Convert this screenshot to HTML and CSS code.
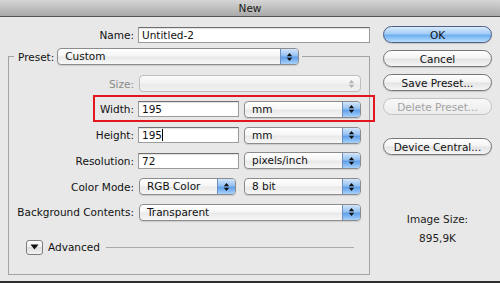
FILE: index.html
```html
<!DOCTYPE html>
<html lang="en">
<head>
  <meta charset="UTF-8">
  <title>New</title>
  <link rel="stylesheet" href="styles.css">
</head>
<body>

  <div class="window">
    <!-- Title bar -->
    <div class="titlebar">New</div>

    <div class="content">
      <!-- Left side: document settings -->
      <div class="main">
        <div class="row name-row">
          <label class="label">Name:</label>
          <div class="field w-name">Untitled-2</div>
        </div>

        <fieldset class="preset-box">
          <legend class="preset-legend">
            <span class="preset-label">Preset:</span>
            <div class="popup w-preset">
              <span class="popup-text">Custom</span>
              <span class="stepper"><svg width="7" height="10" viewBox="0 0 7 10"><path d="M3.5 1L6.2 4.2H0.8Z M3.5 9L6.2 5.8H0.8Z"/></svg></span>
            </div>
          </legend>

          <div class="rows">
            <div class="row">
              <label class="label disabled">Size:</label>
              <div class="popup w-full is-disabled">
                <span class="popup-text"></span>
                <span class="stepper"><svg width="7" height="10" viewBox="0 0 7 10"><path d="M3.5 1L6.2 4.2H0.8Z M3.5 9L6.2 5.8H0.8Z"/></svg></span>
              </div>
            </div>

            <div class="row">
              <label class="label">Width:</label>
              <div class="field w-num">195</div>
              <div class="popup w-unit">
                <span class="popup-text">mm</span>
                <span class="stepper"><svg width="7" height="10" viewBox="0 0 7 10"><path d="M3.5 1L6.2 4.2H0.8Z M3.5 9L6.2 5.8H0.8Z"/></svg></span>
              </div>
            </div>

            <div class="row">
              <label class="label">Height:</label>
              <div class="field w-num">195<span class="caret"></span></div>
              <div class="popup w-unit">
                <span class="popup-text">mm</span>
                <span class="stepper"><svg width="7" height="10" viewBox="0 0 7 10"><path d="M3.5 1L6.2 4.2H0.8Z M3.5 9L6.2 5.8H0.8Z"/></svg></span>
              </div>
            </div>

            <div class="row">
              <label class="label">Resolution:</label>
              <div class="field w-num">72</div>
              <div class="popup w-unit">
                <span class="popup-text">pixels/inch</span>
                <span class="stepper"><svg width="7" height="10" viewBox="0 0 7 10"><path d="M3.5 1L6.2 4.2H0.8Z M3.5 9L6.2 5.8H0.8Z"/></svg></span>
              </div>
            </div>

            <div class="row">
              <label class="label">Color Mode:</label>
              <div class="popup w-mode">
                <span class="popup-text">RGB Color</span>
                <span class="stepper"><svg width="7" height="10" viewBox="0 0 7 10"><path d="M3.5 1L6.2 4.2H0.8Z M3.5 9L6.2 5.8H0.8Z"/></svg></span>
              </div>
              <div class="popup w-unit">
                <span class="popup-text">8 bit</span>
                <span class="stepper"><svg width="7" height="10" viewBox="0 0 7 10"><path d="M3.5 1L6.2 4.2H0.8Z M3.5 9L6.2 5.8H0.8Z"/></svg></span>
              </div>
            </div>

            <div class="row">
              <label class="label">Background Contents:</label>
              <div class="popup w-full">
                <span class="popup-text">Transparent</span>
                <span class="stepper"><svg width="7" height="10" viewBox="0 0 7 10"><path d="M3.5 1L6.2 4.2H0.8Z M3.5 9L6.2 5.8H0.8Z"/></svg></span>
              </div>
            </div>
          </div>

          <!-- Advanced disclosure -->
          <div class="advanced">
            <span class="disclosure"><svg width="9" height="6" viewBox="0 0 9 6"><path d="M0.5 0.5H8.5L4.5 5.5Z"/></svg></span>
            <span class="advanced-text">Advanced</span>
            <span class="advanced-line"></span>
          </div>
        </fieldset>
      </div>

      <!-- Right side: buttons -->
      <div class="side">
        <button class="btn btn-default">OK</button>
        <button class="btn">Cancel</button>
        <button class="btn">Save Preset...</button>
        <button class="btn" disabled>Delete Preset...</button>
        <button class="btn btn-gap">Device Central...</button>

        <div class="image-size">
          <p>Image Size:</p>
          <p>895,9K</p>
        </div>
      </div>
    </div>

    <div class="bottom-edge"></div>

    <!-- Red highlight around the Width row -->
    <div class="highlight"></div>
  </div>

</body>
</html>
```

FILE: styles.css
```css
body {
  margin: 0;
  padding: 0;
  font-family: "DejaVu Sans", Verdana, sans-serif;
  font-size: 10.5px;
  color: #111;
}

.window {
  position: relative;
  width: 500px;
  height: 283px;
  background-color: #e8e8e8;
  display: flex;
  flex-direction: column;
  overflow: hidden;
}

.titlebar {
  height: 16px;
  line-height: 16px;
  text-align: center;
  color: #1a1a1a;
  background: linear-gradient(#d6d6d6, #a9a9a9);
  border-bottom: 1px solid #555;
}

.content {
  flex: 1;
  display: flex;
  padding: 0 8px;
}

.bottom-edge {
  height: 2px;
  background-color: #2e2e2e;
}

/* Left column */
.main {
  width: 362px;
}

.row {
  display: flex;
  align-items: center;
  height: 17px;
}

.name-row {
  margin-top: 9px;
}

.label {
  width: 129px;
  padding-right: 4px;
  box-sizing: border-box;
  text-align: right;
  white-space: nowrap;
}

.name-row .label {
  width: 130px;
}

.label.disabled {
  color: #8a8a8a;
}

.field {
  height: 16px;
  line-height: 15px;
  padding-left: 3px;
  box-sizing: border-box;
  background: #fff;
  border: 1px solid #9b9b9b;
  border-top-color: #6e6e6e;
  box-shadow: inset 0 1px 1px rgba(0, 0, 0, 0.12);
}

.caret {
  display: inline-block;
  width: 1px;
  height: 12px;
  background: #000;
  vertical-align: -2px;
}

.w-name { width: 232px; }
.w-num { width: 101px; margin-right: 5px; }
.w-unit { width: 117px; }
.w-mode { width: 97px; margin-left: 1px; margin-right: 8px; }
.w-full { width: 222px; margin-left: 1px; }
.w-preset { width: 242px; }

/* Popup menus */
.popup {
  display: flex;
  height: 17px;
  box-sizing: border-box;
  border: 1px solid #8c8c8c;
  border-radius: 4px;
  overflow: hidden;
  background: linear-gradient(#ffffff, #f6f6f6 45%, #e9e9e9 55%, #f7f7f7);
  box-shadow: 0 1px 1px rgba(0, 0, 0, 0.12);
}

.popup-text {
  flex: 1;
  padding-left: 7px;
  line-height: 15px;
  white-space: nowrap;
}

.stepper {
  width: 17px;
  display: flex;
  align-items: center;
  justify-content: center;
  border-left: 1px solid #6d8fbf;
  background: linear-gradient(#d3e6fb, #94c1f1 45%, #5f9fe9 55%, #a9d2fa);
}

.stepper svg {
  fill: #111;
}

.popup.is-disabled {
  border-color: #bdbdbd;
  box-shadow: none;
  background: linear-gradient(#fbfbfb, #f1f1f1 50%, #e9e9e9 50%, #f2f2f2);
}

.popup.is-disabled .stepper {
  border-left: none;
  background: none;
}

.popup.is-disabled .stepper svg {
  fill: #b0b0b0;
}

/* Preset group */
.preset-box {
  margin: 5px 0 0 0;
  padding: 0 0 15px 0;
  width: 362px;
  height: 227px;
  box-sizing: border-box;
  border: 1px solid #a3a3a3;
}

.preset-legend {
  display: flex;
  align-items: center;
  margin-left: 5px;
  padding: 0 3px 0 4px;
}

.preset-label {
  margin-right: 3px;
}

.rows {
  display: flex;
  flex-direction: column;
  gap: 8.8px;
  margin-top: 10px;
}

.advanced {
  display: flex;
  align-items: center;
  margin: 18.5px 0 0 17px;
  height: 16px;
}

.disclosure {
  width: 17px;
  height: 15px;
  box-sizing: border-box;
  display: flex;
  align-items: center;
  justify-content: center;
  border: 1px solid #7e7e7e;
  border-radius: 3px;
  background: linear-gradient(#ffffff, #ececec 50%, #dedede 50%, #f3f3f3);
}

.disclosure svg {
  fill: #111;
}

.advanced-text {
  margin-left: 5px;
}

.advanced-line {
  width: 248px;
  margin-left: 6px;
  border-top: 1px solid #a9a9a9;
}

/* Right column */
.side {
  width: 109px;
  margin-left: 13px;
  padding-top: 9px;
  display: flex;
  flex-direction: column;
  gap: 7px;
}

.btn {
  height: 17px;
  padding: 0;
  font-family: inherit;
  font-size: 10.5px;
  color: #111;
  border: 1px solid #777;
  border-radius: 9px;
  background: linear-gradient(#ffffff, #f4f4f4 45%, #e4e4e4 55%, #f6f6f6);
  box-shadow: 0 1px 1px rgba(0, 0, 0, 0.15);
}

.btn-default {
  border-color: #4f5f85;
  background: linear-gradient(#d9eafc, #a3cdf6 45%, #6eaef0 55%, #b7defd);
}

.btn:disabled {
  color: #a3a3a3;
  border-color: #c2c2c2;
  box-shadow: none;
  background: linear-gradient(#f8f8f8, #ececec);
}

.btn-gap {
  margin-top: 16px;
}

.image-size {
  margin-top: 51px;
  text-align: center;
  color: #222;
}

.image-size p {
  margin: 0 0 6px 0;
  line-height: 13px;
}

/* annotation box drawn over the dialog */
.highlight {
  position: absolute;
  left: 93px;
  top: 95px;
  width: 282px;
  height: 27px;
  box-sizing: border-box;
  border: 2px solid #e3151d;
}
```
